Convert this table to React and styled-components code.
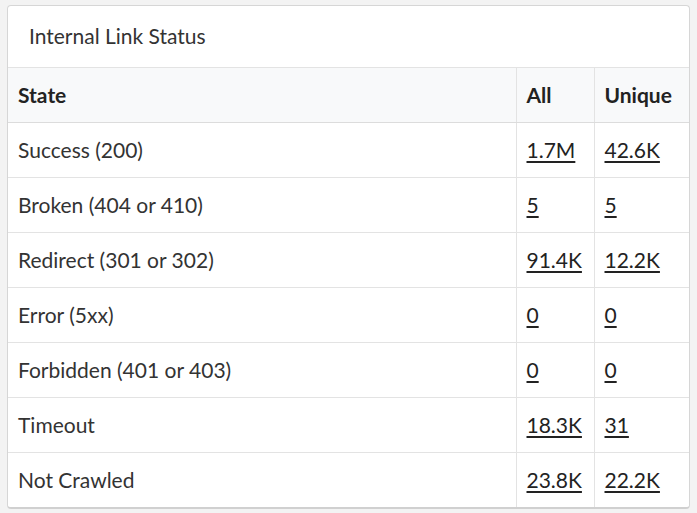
import React from "react";
import styled, { createGlobalStyle } from "styled-components";

const GlobalStyle = createGlobalStyle`
  body {
    margin: 0;
    background: #f3f3f3;
    font-family: Lato, "Open Sans", sans-serif;
    color: #333;
  }
`;

const Card = styled.div`
  margin: 5px 0 0 7px;
  width: 681px;
  background: #fff;
  border: 1px solid #d6d6d6;
  border-bottom: 2px solid #d0d0d0;
  border-radius: 4px;
  overflow: hidden;
`;

const CardTitle = styled.div`
  height: 61px;
  box-sizing: border-box;
  padding: 0 0 2px 21px;
  display: flex;
  align-items: center;
  font-size: 21px;
  color: #333;
`;

const Table = styled.table`
  width: 100%;
  border-collapse: collapse;
  table-layout: fixed;
  font-size: 21px;
`;

const Head = styled.th`
  height: 52px;
  padding: 0 10px 2px;
  text-align: left;
  font-weight: 700;
  color: #222;
  background: #f8f9fa;
  border-top: 1px solid #e3e3e3;
  border-bottom: 1px solid #dcdcdc;
  border-left: ${(p) => (p.$first ? "none" : "1px solid #e3e3e3")};
`;

const Cell = styled.td`
  height: 52px;
  padding: 0 10px 2px;
  border-bottom: ${(p) => (p.$last ? "none" : "1px solid #e3e3e3")};
  border-left: ${(p) => (p.$first ? "none" : "1px solid #e3e3e3")};
  color: #333;
`;

const Num = styled.a`
  color: #222;
  text-decoration: underline;
  text-underline-offset: 3px;
  cursor: pointer;
`;

const rows = [
  ["Success (200)", "1.7M", "42.6K"],
  ["Broken (404 or 410)", "5", "5"],
  ["Redirect (301 or 302)", "91.4K", "12.2K"],
  ["Error (5xx)", "0", "0"],
  ["Forbidden (401 or 403)", "0", "0"],
  ["Timeout", "18.3K", "31"],
  ["Not Crawled", "23.8K", "22.2K"],
];

export default function App() {
  return (
    <>
      <GlobalStyle />
      <Card>
        <CardTitle>Internal Link Status</CardTitle>
        <Table>
          <colgroup>
            <col style={{ width: 508 }} />
            <col style={{ width: 78 }} />
            <col />
          </colgroup>
          <thead>
            <tr>
              <Head $first>State</Head>
              <Head>All</Head>
              <Head>Unique</Head>
            </tr>
          </thead>
          <tbody>
            {rows.map(([state, all, unique], i) => (
              <tr key={state}>
                <Cell $first $last={i === rows.length - 1}>{state}</Cell>
                <Cell $last={i === rows.length - 1}><Num>{all}</Num></Cell>
                <Cell $last={i === rows.length - 1}><Num>{unique}</Num></Cell>
              </tr>
            ))}
          </tbody>
        </Table>
      </Card>
    </>
  );
}
